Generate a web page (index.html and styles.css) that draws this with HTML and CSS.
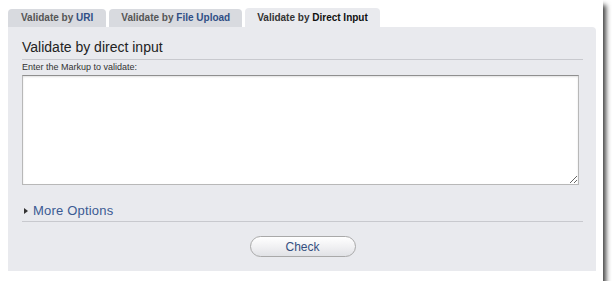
FILE: index.html
```html
<!DOCTYPE html>
<html lang="en">
<head>
    <meta charset="UTF-8">
    <title>Validate by Direct Input</title>
    <link rel="stylesheet" href="styles.css">
</head>
<body>
    <div class="frame">
        <div class="tabs">
            <div class="tab">Validate by <span class="hl">URI</span></div>
            <div class="tab">Validate by <span class="hl">File Upload</span></div>
            <div class="tab active">Validate by <span class="hl">Direct Input</span></div>
        </div>
        <div class="panel">
            <h2 class="title">Validate by direct input</h2>
            <label class="field-label" for="fragment">Enter the Markup to validate:</label>
            <textarea id="fragment" class="markup"></textarea>
            <div class="more">
                <span class="arrow"></span>
                <a href="#" class="more-link">More Options</a>
            </div>
            <div class="actions">
                <button class="check">Check</button>
            </div>
        </div>
    </div>
</body>
</html>
```

FILE: styles.css
```css
body {
    margin: 0;
    background: #fff;
    font-family: "Liberation Sans", Arial, sans-serif;
}
.frame {
    width: 603px;
    height: 281px;
    box-sizing: border-box;
    padding: 8px 7px 0 8px;
    background: #fff;
    box-shadow: 3px 5px 5px rgba(0, 0, 0, 0.75);
}
.tabs {
    display: flex;
    align-items: flex-end;
    gap: 3px;
    height: 19px;
}
.tab {
    height: 18px;
    line-height: 18px;
    padding: 0 13px;
    background: #d8dadf;
    border-radius: 4px 4px 0 0;
    font-size: 10px;
    font-weight: bold;
    color: #555;
    white-space: nowrap;
}
.tab .hl {
    color: #2f4f86;
}
.tab:nth-child(2) {
    padding: 0 12px;
}
.tab.active {
    height: 19px;
    line-height: 20px;
    padding: 0 12px;
    background: #e9eaee;
    color: #333;
}
.tab.active .hl {
    color: #111;
}
.panel {
    height: 244px;
    box-sizing: border-box;
    padding: 12px 13px 0 14px;
    background: #e9eaee;
    border-radius: 0 4px 0 0;
}
.title {
    margin: 0;
    padding-bottom: 4px;
    border-bottom: 1px solid #c8c9ce;
    font-size: 14px;
    line-height: 16px;
    font-weight: normal;
    color: #222;
}
.field-label {
    display: block;
    margin-top: 2px;
    font-size: 9px;
    line-height: 11px;
    color: #333;
}
.markup {
    display: block;
    box-sizing: border-box;
    width: 557px;
    height: 110px;
    margin: 2px 0 0;
    background: #fff;
    border: 1px solid #b8b8b8;
    border-top-color: #8f8f8f;
    box-shadow: inset 0 1px 2px rgba(0, 0, 0, 0.12);
}
.more {
    display: flex;
    align-items: center;
    margin-top: 18px;
    padding-bottom: 3px;
    border-bottom: 1px solid #c8c9ce;
    line-height: 15px;
}
.arrow {
    width: 0;
    height: 0;
    margin: 0 5px 0 2px;
    border-left: 4px solid #333;
    border-top: 3px solid transparent;
    border-bottom: 3px solid transparent;
}
.more-link {
    font-size: 13px;
    color: #3b5a93;
    text-decoration: none;
    letter-spacing: 0.2px;
}
.actions {
    display: flex;
    justify-content: center;
    margin-top: 14px;
}
.check {
    width: 106px;
    height: 21px;
    border: 1px solid #a9a9a9;
    border-radius: 11px;
    background: linear-gradient(#ffffff, #f1f1f3 50%, #e1e2e6);
    font-family: "Liberation Sans", Arial, sans-serif;
    font-size: 12px;
    color: #344f80;
    cursor: pointer;
}
```
